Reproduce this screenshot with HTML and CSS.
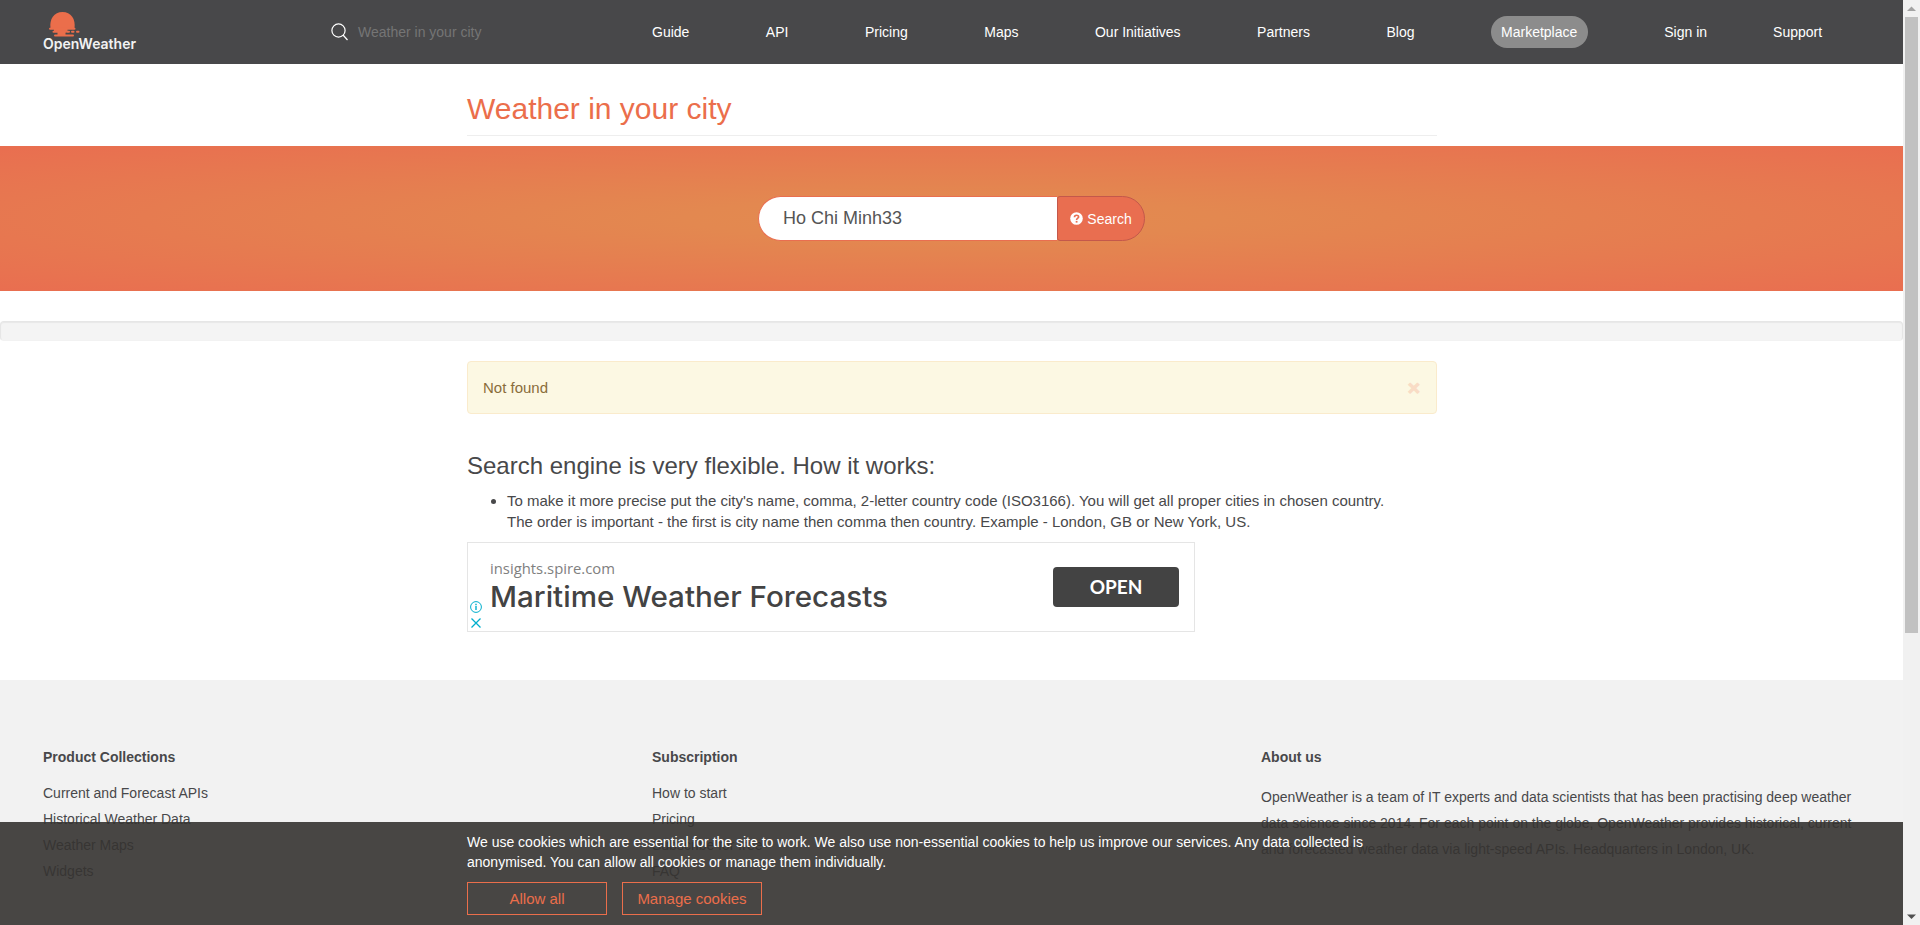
FILE: index.html
```html
<!DOCTYPE html>
<html lang="en">
<head>
<meta charset="utf-8">
<title>Weather in your city</title>
<link rel="stylesheet" href="styles.css">
</head>
<body>
<div class="window">
<div class="page">
  <header class="topbar">
    <svg class="logo" width="96" height="44" viewBox="0 0 96 44">
      <g fill="#eb6e4b">
        <path d="M7.500 18.500C6.200 9 11 2 19.500 2S32.800 9 31.500 18.500z"/>
        <rect x="6" y="17.700" width="26.500" height="2" rx="1"/>
        <rect x="11" y="19" width="13.500" height="2.500"/>
        <rect x="9.500" y="20.700" width="14" height="2" rx="1"/>
        <rect x="23" y="20.700" width="4" height="2" rx="1"/>
        <rect x="28" y="20.700" width="3.500" height="2" rx="1"/>
        <rect x="33" y="20.700" width="3.500" height="2" rx="1"/>
        <rect x="14.500" y="22" width="8" height="3"/>
        <rect x="11" y="24.400" width="20" height="2" rx="1"/>
      </g>
      <text class="logo-text" x="0" y="39" textLength="93" lengthAdjust="spacingAndGlyphs">OpenWeather</text>
    </svg>
    <div class="quick">
      <svg width="18" height="18" viewBox="0 0 18 18" fill="none" stroke="#fff" stroke-width="1.200"><circle cx="7.500" cy="7.500" r="6.600"/><path d="M12 12l4.500 5"/></svg>
      <span>Weather in your city</span>
    </div>
    <nav class="nav">
      <a>Guide</a><a>API</a><a>Pricing</a><a>Maps</a><a>Our Initiatives</a><a>Partners</a><a>Blog</a><a class="pill">Marketplace</a><a>Sign in</a><a class="support">Support</a>
    </nav>
  </header>
  <div class="container"><h1 class="title">Weather in your city</h1></div>
  <section class="hero">
    <div class="field">Ho Chi Minh33</div>
    <div class="search-btn">
      <svg width="13" height="13" viewBox="0 0 13 13"><circle cx="6.500" cy="6.500" r="6.300" fill="#fff"/><path d="M4.500 5.200C4.500 2.600 8.600 2.700 8.600 4.900C8.600 6.200 6.600 6.200 6.600 7.900" fill="none" stroke="#e96e50" stroke-width="1.700"/><rect x="5.700" y="8.900" width="1.800" height="1.700" fill="#e96e50"/></svg>
      <span>Search</span>
    </div>
  </section>
  <div class="well"></div>
  <main class="container">
    <div class="alert"><span>Not found</span><b class="close">×</b></div>
    <h2 class="subtitle">Search engine is very flexible. How it works:</h2>
    <ul class="tips"><li>To make it more precise put the city's name, comma, 2-letter country code (ISO3166). You will get all proper cities in chosen country.<br>The order is important - the first is city name then comma then country. Example - London, GB or New York, US.</li></ul>
    <div class="ad">
      <div class="ad-marks">
        <svg width="12" height="12" viewBox="0 0 12 12"><circle cx="6" cy="6" r="5.400" fill="none" stroke="#00aecd"/><path d="M6 5v4M6 2.800v1.400" stroke="#00aecd" stroke-width="1.400"/></svg>
        <svg width="12" height="12" viewBox="0 0 12 12"><path d="M1.500 1.500l9 9M10.500 1.500l-9 9" stroke="#00aecd" stroke-width="1.300"/></svg>
      </div>
      <div class="ad-copy">
        <svg width="420" height="60" viewBox="0 0 420 60">
          <text class="ad-url" x="0" y="16.300" textLength="125" lengthAdjust="spacingAndGlyphs">insights.spire.com</text>
          <text class="ad-title" x="0" y="49.300" textLength="398" lengthAdjust="spacingAndGlyphs">Maritime Weather Forecasts</text>
        </svg>
      </div>
      <div class="ad-open">OPEN</div>
    </div>
  </main>
  <footer class="footer">
    <div class="col">
      <h3>Product Collections</h3>
      <a>Current and Forecast APIs</a><a>Historical Weather Data</a><a>Weather Maps</a><a>Widgets</a>
      <h3 class="next">Technologies</h3>
    </div>
    <div class="col">
      <h3>Subscription</h3>
      <a>How to start</a><a>Pricing</a><a>Subscribe for free</a><a>FAQ</a>
      <h3 class="next">Terms &amp; Conditions</h3>
    </div>
    <div class="col about">
      <h3>About us</h3>
      <p>OpenWeather is a team of IT experts and data scientists that has been practising deep weather data science since 2014. For each point on the globe, OpenWeather provides historical, current and forecasted weather data via light-speed APIs. Headquarters in London, UK.</p>
    </div>
  </footer>
  <aside class="cookies">
    <div class="container">
      <p>We use cookies which are essential for the site to work. We also use non-essential cookies to help us improve our services. Any data collected is<br>anonymised. You can allow all cookies or manage them individually.</p>
      <div class="cookie-btns"><a>Allow all</a><a>Manage cookies</a></div>
    </div>
  </aside>
</div>
<div class="scrollbar">
  <svg width="17" height="17" viewBox="0 0 17 17"><path d="M4 11l4.500-4.500L13 11z" fill="#a3a3a3"/></svg>
  <div class="thumb"></div>
  <svg width="17" height="17" viewBox="0 0 17 17"><path d="M4 6.500h9L8.500 11z" fill="#505050"/></svg>
</div>
</div>
</body>
</html>
```
FILE: styles.css
```css
* { box-sizing: border-box; }
body { margin: 0; font-family: "Liberation Sans", Arial, sans-serif; color: #48484a; overflow: hidden; }
h1, h2, h3, p, ul { margin: 0; font-weight: normal; }
.window { display: flex; width: 1920px; height: 925px; overflow: hidden; }
.page { position: relative; width: 1903px; height: 925px; overflow: hidden; background: #fff; }
.container { width: 970px; margin-left: 467px; }

.topbar { display: flex; align-items: center; height: 64px; background: #48484a; color: #fff; font-size: 14px; }
.logo { margin-left: 43px; flex: none; }
.logo-text { font: 600 14.500px Inter, sans-serif; fill: #f2f2f2; }
.quick { display: flex; align-items: center; gap: 9px; margin-left: 192px; width: 321px; color: #757575; }
.nav { display: flex; align-items: center; gap: 76.5px; white-space: nowrap; }
.pill { padding: 0 10.5px 0 10px; line-height: 32px; border-radius: 16px; background: #8c8c8c; }
.support { margin-left: -10.500px; }

.title { height: 72px; border-bottom: 1px solid #eee; padding-top: 27px; font-size: 30px; line-height: 36px; color: #eb6e4b; }
.hero { display: flex; justify-content: center; align-items: center; height: 145px; margin-top: 10px; background: radial-gradient(ellipse farthest-corner at center, #e38b4f 0%, #e38850 20%, #e96e50 100%); }
.field { width: 299px; height: 45px; padding-left: 24px; border: 1px solid #e96e50; border-right: 0; border-radius: 23px 0 0 23px; background: #fff; color: #555; font-size: 18px; line-height: 42px; }
.search-btn { display: flex; justify-content: center; align-items: center; gap: 4px; width: 88px; height: 45px; border: 1px solid #c4584b; border-radius: 3px 23px 23px 3px; background: #e96e50; color: #fff; font-size: 14px; }

.well { height: 20px; margin: 30px 0 20px; border: 1px solid #e6e6e6; border-bottom-color: #f2f2f2; border-radius: 4px; background: #f4f4f4; box-shadow: inset 0 1px 1px rgba(0,0,0,.05); }
.alert { display: flex; justify-content: space-between; align-items: center; height: 53px; padding: 0 16px 0 15px; border: 1px solid #faebcc; border-radius: 4px; background: #fcf8e3; color: #8a6d3b; font-size: 15px; }
.close { font-size: 21px; color: #f9dcc5; line-height: 21px; -webkit-text-stroke: 1px #f9dcc5; }
.subtitle { margin-top: 39px; font-size: 24px; line-height: 26px; }
.tips { margin-top: 11px; padding-left: 40px; font-size: 15px; line-height: 21px; white-space: nowrap; }

.ad { display: flex; width: 728px; height: 90px; margin-top: 10px; border: 1px solid #e5e5e5; }
.ad-marks { display: flex; flex-direction: column; gap: 4px; width: 22px; padding: 58px 0 0 2px; }
.ad-copy { width: 563px; padding-top: 15px; }
.ad-copy svg { display: block; }
.ad-url { font: 15px "Open Sans", sans-serif; fill: #808080; }
.ad-title { font: 500 28.500px Inter, sans-serif; fill: #434343; }
.ad-open { width: 126px; height: 40px; margin-top: 24px; border-radius: 4px; background: #434343; color: #fff; font: 700 19px/39px Lato, sans-serif; text-align: center; }

.footer { display: flex; height: 400px; margin-top: 48px; padding: 67px 0 0 43px; background: #f2f2f2; font-size: 14px; }
.col { width: 609px; }
.col h3 { font-size: 14px; font-weight: 700; line-height: 20px; margin-bottom: 13px; }
.col a { display: block; line-height: 26px; }
.col .next { margin-top: 38px; }
.about p { width: 596px; margin-top: 17px; line-height: 26px; }

.cookies { position: absolute; left: 0; right: 0; bottom: 0; height: 103px; padding-top: 10px; background: rgba(53,51,49,.9); color: #fff; }
.cookies p { font-size: 14px; line-height: 20px; white-space: nowrap; }
.cookie-btns { display: flex; gap: 15px; margin-top: 10px; }
.cookie-btns a { width: 140px; height: 33px; border: 1px solid #eb6e4b; color: #eb6e4b; font-size: 15px; line-height: 32px; text-align: center; }

.scrollbar { display: flex; flex-direction: column; width: 17px; height: 925px; background: #f1f1f1; }
.thumb { width: 13px; height: 616px; margin: 0 2px auto; background: #c1c1c1; }
```
